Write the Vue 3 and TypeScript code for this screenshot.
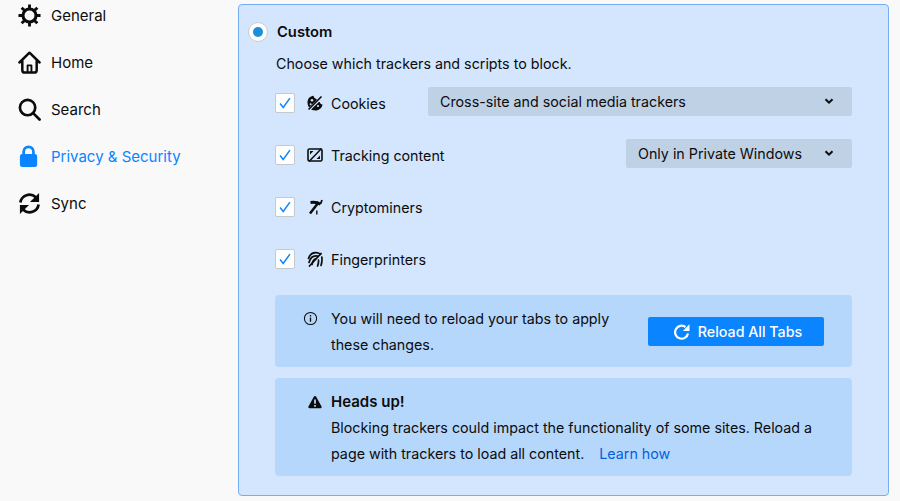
<script setup lang="ts">
const nav = [
  { id: "general", label: "General" },
  { id: "home", label: "Home" },
  { id: "search", label: "Search" },
  { id: "privacy", label: "Privacy & Security", active: true },
  { id: "sync", label: "Sync" },
];

const trackers = [
  { id: "cookies", label: "Cookies", select: "Cross-site and social media trackers" },
  { id: "tracking", label: "Tracking content", select: "Only in Private Windows" },
  { id: "miners", label: "Cryptominers" },
  { id: "prints", label: "Fingerprinters" },
];
</script>

<template>
  <div class="page">
    <nav class="sidebar">
      <a v-for="item in nav" :key="item.id" class="nav_item" :class="{ active: item.active }">
        <svg class="nav_icon" viewBox="0 0 24 24">
          <g v-if="item.id === 'general'" fill="none" stroke="currentColor">
            <circle cx="12" cy="12" r="6.800" stroke-width="3.200" />
            <path stroke-width="3" d="M12 .5v4M12 19.500v4M.5 12h4M19.500 12h4M3.800 3.800l2.800 2.800M17.400 17.400l2.800 2.800M20.200 3.800l-2.800 2.800M6.600 17.400l-2.800 2.800" />
          </g>
          <g v-else-if="item.id === 'home'" fill="none" stroke="currentColor" stroke-width="2.600" stroke-linejoin="round" stroke-linecap="round">
            <path d="M1.500 12L12 1.800 22.500 12M4.500 10.500V20a2.500 2.500 0 0 0 2.500 2.500h10a2.500 2.500 0 0 0 2.500-2.500V10.500" />
            <path stroke-width="2" d="M10 22v-7h4v7" />
          </g>
          <g v-else-if="item.id === 'search'" fill="none" stroke="currentColor" stroke-width="2.800" stroke-linecap="round">
            <circle cx="10" cy="10" r="8" />
            <path d="M15.800 15.800l6.700 6.700" />
          </g>
          <path
            v-else-if="item.id === 'privacy'"
            fill="currentColor"
            transform="translate(-1 -0.5)"
            d="M5.500 10V7.500a6.500 6.500 0 0 1 13 0V10h.5a2.500 2.500 0 0 1 2 2.500V21a2.500 2.500 0 0 1-2.500 2.500h-13A2.500 2.500 0 0 1 3 21v-8.500A2.500 2.500 0 0 1 5 10h.5zm2.800 0h7.400V7.500a3.700 3.700 0 0 0-7.400 0V10z"
          />
          <g v-else fill="none" stroke="currentColor" stroke-width="2.800">
            <path d="M2.500 11a9.500 9.500 0 0 1 16-5.500L20.500 8" />
            <path d="M21.500 13a9.500 9.500 0 0 1-16 5.500L3.500 16" />
            <path fill="currentColor" stroke="none" d="M22 1v9.500h-9.500zM2 23v-9.500h9.500z" />
          </g>
        </svg>
        <span>{{ item.label }}</span>
      </a>
    </nav>

    <main class="panel">
      <div class="custom_head">
        <span class="radio"><i></i></span>
        <strong>Custom</strong>
      </div>
      <p class="choose">Choose which trackers and scripts to block.</p>

      <div v-for="row in trackers" :key="row.id" class="tracker_row">
        <span class="check">
          <svg viewBox="0 0 20 20"><path d="M4.500 10.500l3.500 4.500 7.500-10.500" /></svg>
        </span>
        <svg class="tracker_icon" viewBox="0 0 16 16">
          <g v-if="row.id === 'cookies'">
            <path fill="currentColor" d="M6.500.8C3 1 .5 4 .5 7.500c0 4.500 3.500 8 8 8 3.500 0 6.500-2.500 7-6-1.500 0-2.500-1-2.800-2.500-2 0-3.200-1-3.200-3C8 3.800 6.800 2.500 6.500.8z" />
            <circle cx="5" cy="5.200" r="1.300" fill="#d3e6fd" />
            <circle cx="3.600" cy="9.300" r="1" fill="#d3e6fd" />
            <circle cx="11" cy="11" r="1.100" fill="#d3e6fd" />
            <path fill="none" stroke="#d3e6fd" stroke-width="2.800" d="M1 15.500L15.500 1.500" />
            <path fill="none" stroke="currentColor" stroke-width="1.600" d="M1.500 14.500L14.500 1.500" />
          </g>
          <g v-else-if="row.id === 'tracking'">
            <rect x="1" y="2" width="14" height="12" rx="1.500" fill="none" stroke="currentColor" stroke-width="1.600" />
            <path fill="currentColor" d="M3 4h3.500L3 7.500zM13 12H9.500L13 8.500z" />
            <path fill="none" stroke="currentColor" stroke-width="1.500" d="M2 14.500L14.500 1.500" />
          </g>
          <g v-else-if="row.id === 'miners'" fill="none" stroke="currentColor">
            <path stroke-width="3" d="M3.500 3.500c3.800-.5 7.500 0 10 1.700" />
            <path stroke-width="2.500" d="M11.500 3.500L3 14.500" />
            <path stroke-width="1.800" d="M15 1l-1.500 4" />
            <path stroke-width="1.400" d="M9.800 11.500v4" />
          </g>
          <g v-else fill="none" stroke="currentColor" stroke-width="1.700" stroke-linecap="round">
            <path d="M1.500 7.500C3 3 6.500 1 10.500 1.800c1.200.3 2.200.8 3 1.600" />
            <path d="M2 11.500C3 7.500 5.500 4.800 9 4.800c.8 0 1.500.2 2.200.5" />
            <path d="M5 13.500C5.500 10.500 6.800 8.500 8.500 7.800M14.800 6c.4 2.500.2 5.500-.8 8.500M11.500 9c.2 2-.2 4-.9 6" />
            <path d="M2.500 15L14 2.500" />
          </g>
        </svg>
        <span class="tracker_label">{{ row.label }}</span>
        <div v-if="row.select" class="select" :class="row.id">
          <span>{{ row.select }}</span>
          <svg viewBox="0 0 10 10"><path d="M1.500 3.200L5 6.700l3.500-3.500" /></svg>
        </div>
      </div>

      <section class="notice reload">
        <svg class="info_icon" viewBox="0 0 16 16">
          <circle cx="8" cy="8" r="6.500" fill="none" stroke="currentColor" stroke-width="1.100" />
          <path fill="currentColor" d="M7.300 7h1.400v4.500H7.300zM7.300 4.300h1.400v1.500H7.300z" />
        </svg>
        <p>You will need to reload your tabs to apply these changes.</p>
        <button class="reload_btn" type="button">
          <svg viewBox="0 0 16 16">
            <path fill="none" stroke="currentColor" stroke-width="2.200" d="M14 9.500A6.500 6.500 0 1 1 11.500 3" />
            <path fill="currentColor" d="M15.500 .3v6.700H8.800z" />
          </svg>
          Reload All Tabs
        </button>
      </section>

      <section class="notice warn">
        <svg class="warn_icon" viewBox="0 0 16 16">
          <path fill="currentColor" fill-rule="evenodd" d="M8 1c.5 0 .9.300 1.200.800l6.300 11.400c.5 1-.1 1.800-1.100 1.800H1.600c-1 0-1.600-.8-1.100-1.800L6.800 1.800C7.100 1.300 7.500 1 8 1zM7 5v5h2V5zm0 6.300v2h2v-2z" />
        </svg>
        <div>
          <strong>Heads up!</strong>
          <p>Blocking trackers could impact the functionality of some sites. Reload a page with trackers to load all content. <a class="learn">Learn how</a></p>
        </div>
      </section>
    </main>
  </div>
</template>

<style scoped>
.page {
  display: flex;
  width: 900px;
  height: 501px;
  overflow: hidden;
  background: #f9f9fa;
  color: #0c0c0d;
  font-family: Inter, "Noto Sans", sans-serif;
  font-size: 14.28px;
}

.sidebar {
  display: flex;
  flex-direction: column;
  gap: 17px;
  width: 238px;
  flex: none;
  padding-left: 18px;
  box-sizing: border-box;
}

.nav_item {
  display: flex;
  align-items: center;
  gap: 10px;
  height: 30px;
  font-size: 15px;
}

.nav_item.active {
  color: #0a84ff;
}

.nav_icon {
  width: 23px;
  height: 23px;
  flex: none;
}

.panel {
  box-sizing: border-box;
  width: 651px;
  height: 492px;
  margin-top: 4px;
  border: 1px solid #75aef5;
  border-radius: 4px;
  padding: 12px 36px 0 10px;
  background: #d3e6fd;
}

.custom_head {
  display: flex;
  align-items: center;
  gap: 9px;
  height: 30px;
  margin-left: -1px;
}

.custom_head strong {
  font-size: 14.75px;
  font-weight: 600;
}

.radio {
  display: grid;
  place-items: center;
  box-sizing: border-box;
  width: 20px;
  height: 20px;
  border: 1px solid #c6cbd3;
  border-radius: 50%;
  background: #ffffff;
}

.radio i {
  width: 10px;
  height: 10px;
  border-radius: 50%;
  background: #1c8fd8;
}

.choose {
  height: 24px;
  margin: 5px 0 1px 27px;
  line-height: 24px;
}

.tracker_row {
  display: flex;
  align-items: center;
  height: 52px;
  margin-left: 26px;
}

.check {
  display: grid;
  place-items: center;
  box-sizing: border-box;
  width: 20px;
  height: 20px;
  flex: none;
  border: 1px solid #c4c8cf;
  border-radius: 2px;
  background: #ffffff;
}

.check svg {
  width: 18px;
  height: 18px;
  fill: none;
  stroke: #0a84ff;
  stroke-width: 1.600;
}

.tracker_icon {
  width: 16px;
  height: 16px;
  flex: none;
  margin: 0 8px 0 12px;
}

.tracker_label {
  white-space: nowrap;
}

.select {
  display: flex;
  align-items: center;
  justify-content: space-between;
  box-sizing: border-box;
  height: 29px;
  margin-bottom: 4px;
  margin-left: auto;
  border-radius: 2px;
  padding: 0 18px 0 12px;
  background: #bfd1e5;
}

.select.cookies {
  width: 424px;
}

.select.tracking {
  width: 226px;
}

.select svg {
  width: 10px;
  height: 10px;
  fill: none;
  stroke: #0c0c0d;
  stroke-width: 2;
}

.notice {
  display: flex;
  box-sizing: border-box;
  margin-left: 26px;
  border-radius: 4px;
  background: #b6d7fc;
}

.notice p {
  margin: 0;
  line-height: 26px;
}

.reload {
  align-items: flex-start;
  height: 72px;
  margin-top: 10px;
  padding: 11px 28px 0 28px;
}

.info_icon {
  width: 15px;
  height: 15px;
  flex: none;
  margin: 5px 13px 0 0;
}

.reload p {
  width: 317px;
}

.reload_btn {
  display: flex;
  align-items: center;
  justify-content: center;
  gap: 8px;
  width: 176px;
  height: 29px;
  margin-top: 11px;
  border: 0;
  border-radius: 2px;
  padding: 0 0 0 4px;
  background: #0a84ff;
  color: #ffffff;
  font: 500 14.28px Inter, "Noto Sans", sans-serif;
}

.reload_btn svg {
  width: 16px;
  height: 16px;
}

.warn {
  height: 98px;
  margin-top: 11px;
  padding: 10px 30px 0 33px;
}

.warn_icon {
  width: 14px;
  height: 14px;
  flex: none;
  margin: 7px 9px 0 0;
}

.warn strong {
  display: block;
  height: 27px;
  font-size: 15px;
  line-height: 27px;
  font-weight: 600;
}

.learn {
  margin-left: 11px;
  color: #0060df;
}
</style>
